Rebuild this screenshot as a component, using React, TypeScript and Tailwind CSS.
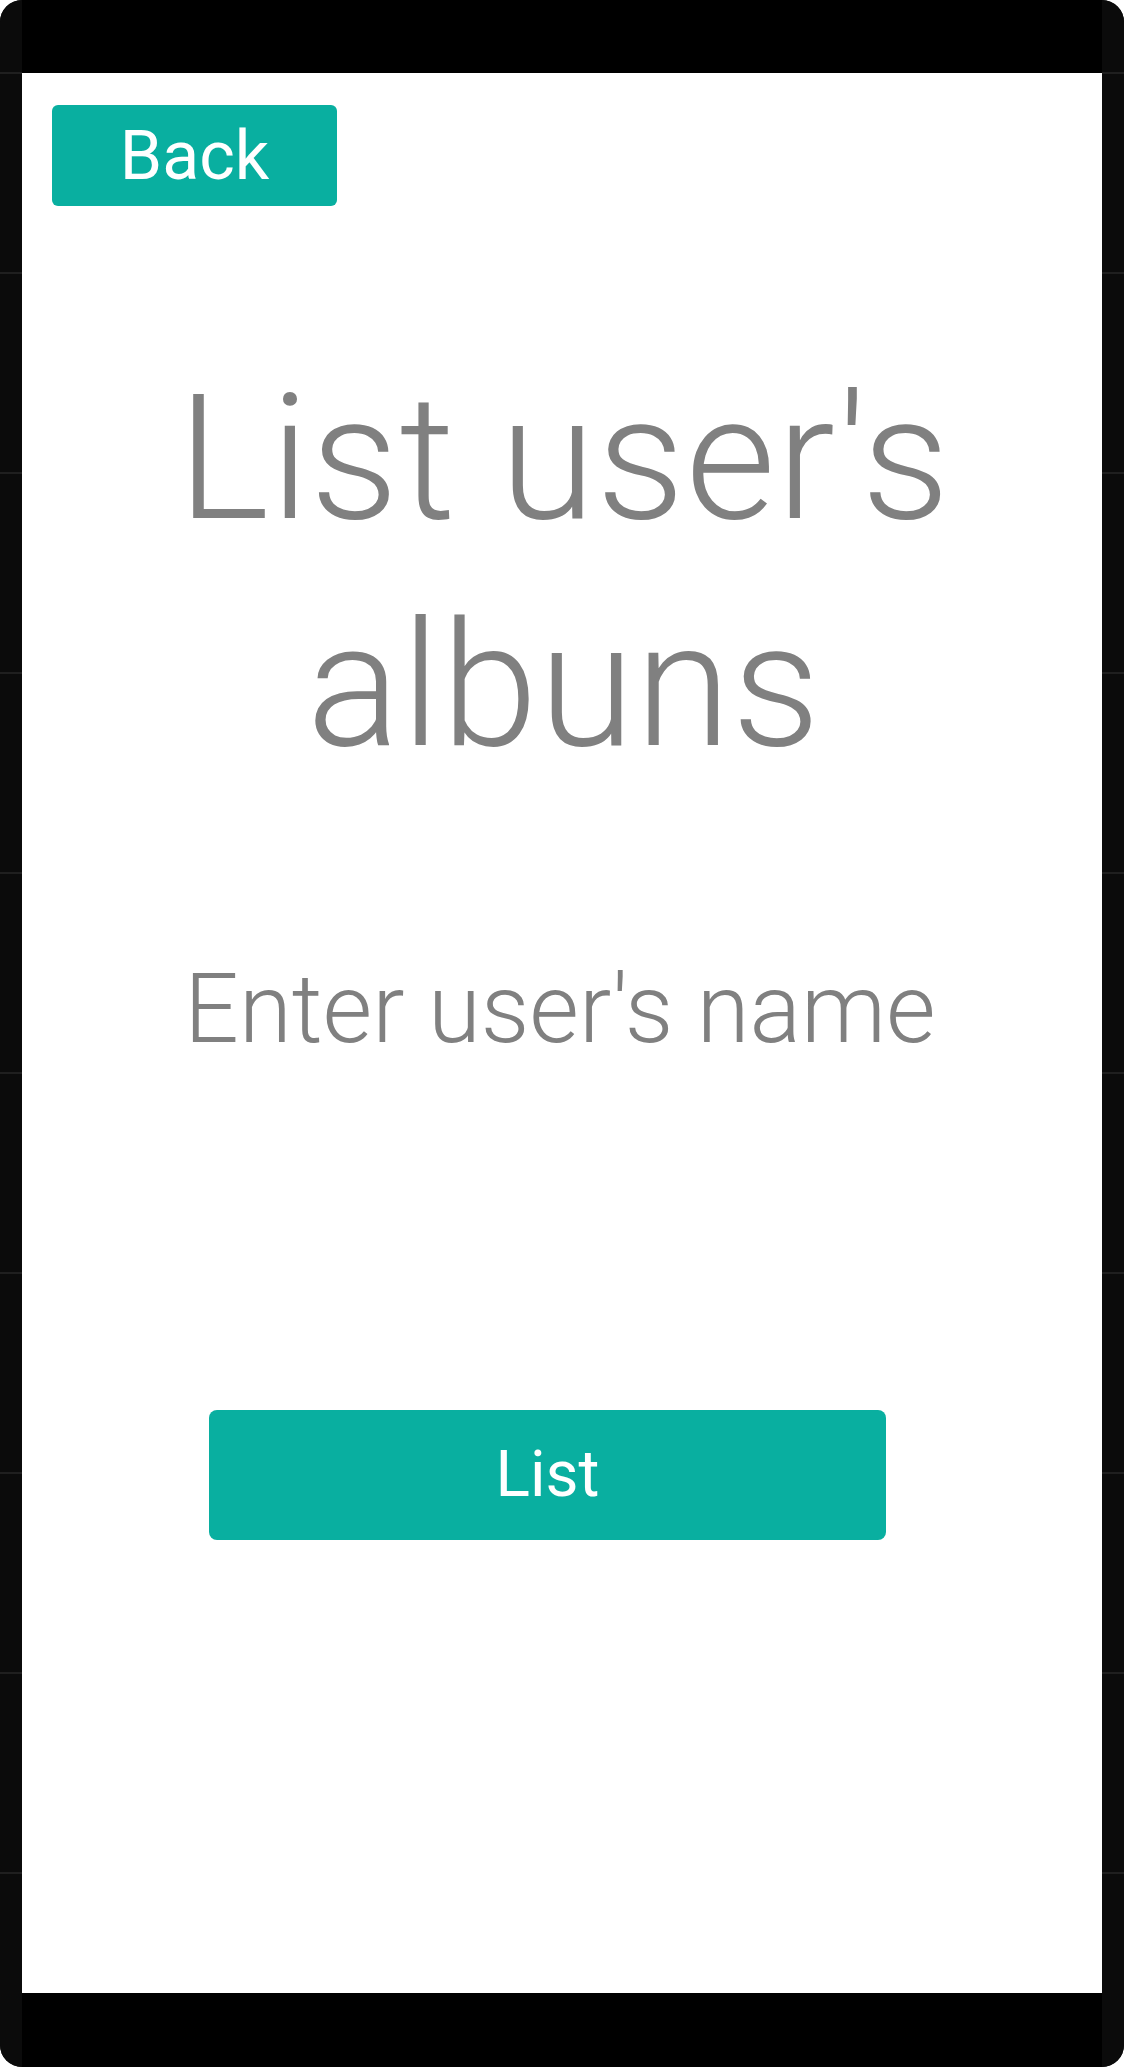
const LINES = Array.from({ length: 10 }, (_, i) => i);

function SideRail() {
  return (
    <div className="flex w-[22px] shrink-0 flex-col overflow-hidden bg-[#0b0b0b]">
      <div className="h-[72px] shrink-0" />
      {LINES.map((i) => (
        <div key={i} className="h-[200px] shrink-0 border-t-2 border-[#1f1f1f]" />
      ))}
    </div>
  );
}

export default function App() {
  return (
    <div
      className="flex h-[2067px] w-[1124px] overflow-hidden rounded-[22px] bg-[#0b0b0b]"
      style={{ fontFamily: "Roboto, 'Liberation Sans', sans-serif" }}
    >
      <SideRail />
      <div className="flex w-[1080px] flex-col">
        <div className="h-[73px] shrink-0 bg-black" />
        <main className="flex h-[1920px] shrink-0 flex-col bg-white">
          <button
            type="button"
            className="ml-[30px] mt-[32px] flex h-[101px] w-[285px] items-center justify-center rounded-[6px] bg-[#09afa0] text-[68px] leading-none text-white"
          >
            Back
          </button>

          <h1 className="mt-[139px] pl-[4px] text-center text-[174px] font-light leading-[227px] tracking-[1px] text-[#808080]">
            List user's
            <br />
            albuns
          </h1>

          <p className="mt-[154px] pr-[4px] text-center text-[96px] font-light leading-[112px] text-[#808080]">
            Enter user's name
          </p>

          <button
            type="button"
            className="ml-[187px] mt-[345px] flex h-[130px] w-[677px] items-center justify-center rounded-[8px] bg-[#09afa0] text-[64px] leading-none text-white"
          >
            List
          </button>
        </main>
        <div className="flex-1 bg-black" />
      </div>
      <SideRail />
    </div>
  );
}
